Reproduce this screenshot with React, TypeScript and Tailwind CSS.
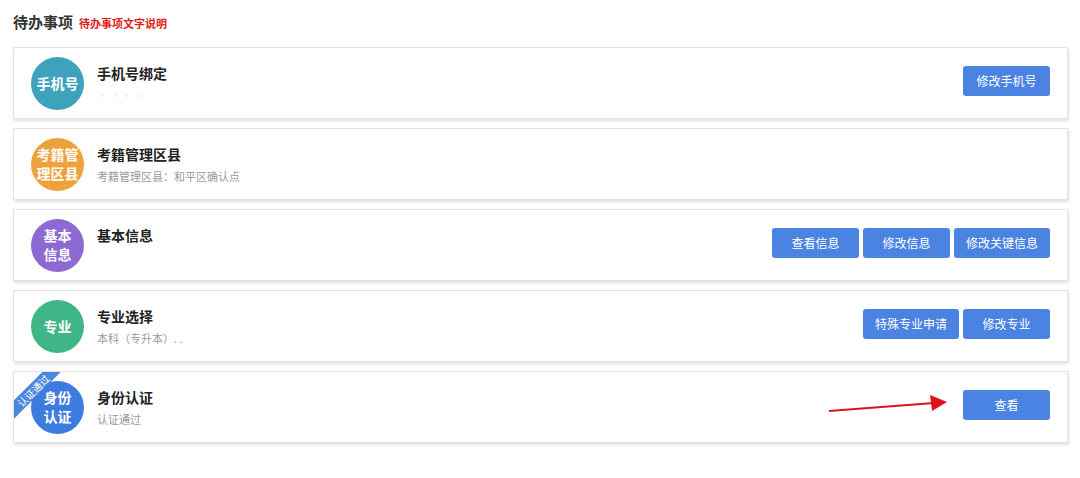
import React from "react";

interface Task {
  id: string;
  badge: string[];
  color: string;
  title: string;
  desc?: string;
  blurred?: boolean;
  actions: { label: string; width: string }[];
  verified?: boolean;
}

const tasks: Task[] = [
  {
    id: "phone",
    badge: ["手机号"],
    color: "bg-[#3ea2bd]",
    title: "手机号绑定",
    desc: "· ·· ·",
    blurred: true,
    actions: [{ label: "修改手机号", width: "w-[87px]" }],
  },
  {
    id: "region",
    badge: ["考籍管", "理区县"],
    color: "bg-[#eea23b]",
    title: "考籍管理区县",
    desc: "考籍管理区县：和平区确认点",
    actions: [],
  },
  {
    id: "info",
    badge: ["基本", "信息"],
    color: "bg-[#8c6ad2]",
    title: "基本信息",
    actions: [
      { label: "查看信息", width: "w-[87px]" },
      { label: "修改信息", width: "w-[87px]" },
      { label: "修改关键信息", width: "w-[96px]" },
    ],
  },
  {
    id: "major",
    badge: ["专业"],
    color: "bg-[#3fb687]",
    title: "专业选择",
    desc: "本科（专升本）. .",
    actions: [
      { label: "特殊专业申请", width: "w-[96px]" },
      { label: "修改专业", width: "w-[87px]" },
    ],
  },
  {
    id: "identity",
    badge: ["身份", "认证"],
    color: "bg-[#3d7be0]",
    title: "身份认证",
    desc: "认证通过",
    actions: [{ label: "查看", width: "w-[87px]" }],
    verified: true,
  },
];

function TaskCard({ task }: { task: Task }) {
  return (
    <div className="relative flex h-[72px] items-center overflow-hidden border border-[#e3e3e3] bg-white pl-[17px] pr-[17px] shadow-[1px_2px_3px_rgba(0,0,0,0.12)]">
      {task.verified && (
        <div className="absolute left-[-21px] top-[12px] z-10 w-[80px] -rotate-45 bg-[#4a88dd] text-center text-[10px] leading-[13px] text-white">
          认证通过
        </div>
      )}
      <div
        className={`flex h-[53px] w-[53px] shrink-0 flex-col items-center justify-center rounded-full ${task.color} text-[14px] font-bold leading-[19px] text-white`}
      >
        {task.badge.map((line) => (
          <span key={line}>{line}</span>
        ))}
      </div>
      <div className="ml-[13px] flex flex-1 flex-col gap-[4px]">
        <div className="text-[14px] font-bold leading-[20px] text-[#222]">{task.title}</div>
        <div
          className={`h-[16px] text-[11px] leading-[16px] ${
            task.blurred ? "text-[#e6ecf3]" : "text-[#9a9a9a]"
          }`}
        >
          {task.desc}
        </div>
      </div>
      <div className="mb-[4px] flex gap-[4px]">
        {task.actions.map((a) => (
          <button
            key={a.label}
            className={`${a.width} h-[30px] rounded-[3px] bg-[#4b83e3] text-[12px] text-white`}
          >
            {a.label}
          </button>
        ))}
      </div>
      {task.verified && (
        <svg
          className="absolute left-[812px] top-[18px]"
          width="122"
          height="24"
          viewBox="0 0 122 24"
        >
          <line x1="3" y1="21" x2="108" y2="13" stroke="#d8141c" strokeWidth="2" />
          <polygon points="104,5 121,12 106,21" fill="#e0101a" />
        </svg>
      )}
    </div>
  );
}

export default function App() {
  return (
    <div
      className="h-[478px] w-[1080px] bg-white px-[13px] pt-[12px]"
      style={{ fontFamily: '"Noto Sans CJK SC", "Noto Sans", sans-serif' }}
    >
      <div className="flex items-baseline gap-[6px]">
        <span className="text-[15px] font-bold leading-[20px] text-[#333]">待办事项</span>
        <span className="text-[11px] font-bold text-[#e02020]">待办事项文字说明</span>
      </div>
      <div className="mt-[15px] flex w-[1055px] flex-col gap-[9px]">
        {tasks.map((t) => (
          <TaskCard key={t.id} task={t} />
        ))}
      </div>
    </div>
  );
}
